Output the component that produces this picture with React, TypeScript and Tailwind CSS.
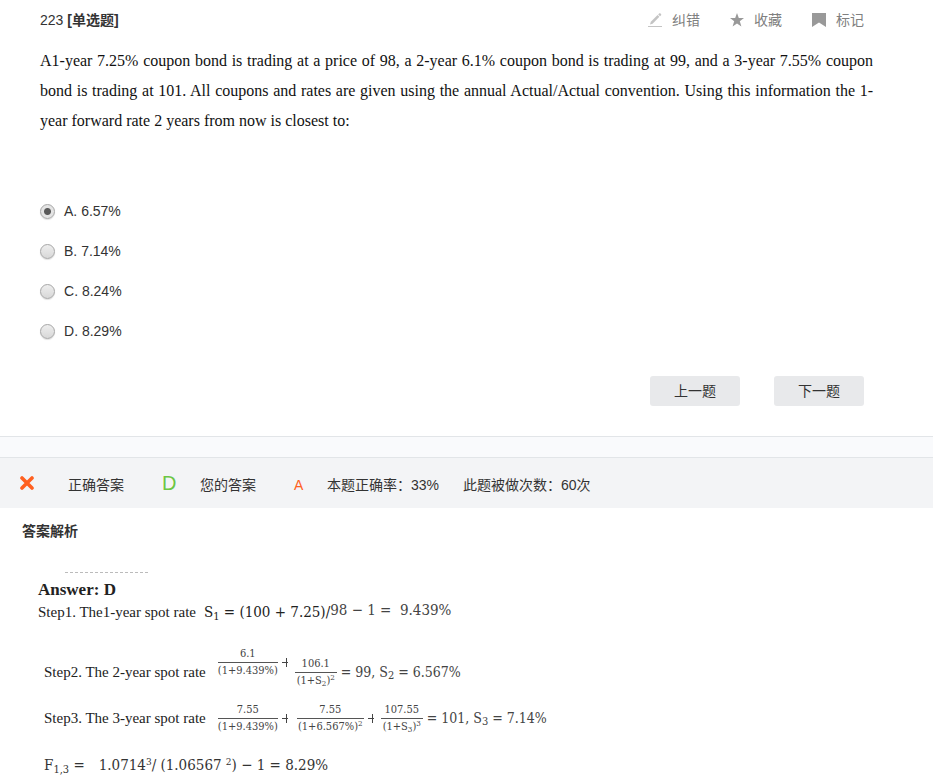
import { useState, type ReactNode } from "react";
import clsx from "clsx";

interface Option {
  key: string;
  value: string;
}

const OPTIONS: Option[] = [
  { key: "A", value: "6.57%" },
  { key: "B", value: "7.14%" },
  { key: "C", value: "8.24%" },
  { key: "D", value: "8.29%" },
];

function PencilIcon() {
  return (
    <svg width="14" height="14" viewBox="0 0 14 14" fill="#c4c4c4" aria-hidden="true">
      <path d="M2 11.5 2.8 8.8 9.6 2 11.4 3.8 4.6 10.7Z" />
      <path d="M10.2 1.4 11.3.3Q11.8 0 12.3.3L13.1 1.2Q13.5 1.7 13.1 2.2L12 3.2Z" />
      <path d="M0 13H14V14H0Z" />
    </svg>
  );
}

function StarIcon() {
  return (
    <svg width="14" height="14" viewBox="0 0 14 14" fill="#999" aria-hidden="true">
      <path d="M7 0 8.8 5H14L9.8 8.2 11.4 13.6 7 10.4 2.6 13.6 4.2 8.2 0 5H5.2Z" />
    </svg>
  );
}

function BookmarkIcon() {
  return (
    <svg width="14" height="14" viewBox="0 0 14 14" fill="#999" aria-hidden="true">
      <path d="M0 0H14V14L7 9.5 0 14Z" />
    </svg>
  );
}

function WrongIcon() {
  return (
    <svg width="14" height="14" viewBox="0 0 14 14" role="img" aria-label="错误">
      <path d="M2 2 12 12M12 2 2 12" stroke="#ff6020" strokeWidth="3.6" strokeLinecap="round" />
    </svg>
  );
}

function ToolButton({ icon, label }: { icon: ReactNode; label: string }) {
  return (
    <button type="button" className="flex items-center gap-[10px] text-[#808080]">
      {icon}
      {label}
    </button>
  );
}

function MathText({ children, className }: { children: ReactNode; className?: string }) {
  return (
    <span className={clsx("font-['DejaVu_Serif_Condensed','DejaVu_Serif',serif]", className)}>{children}</span>
  );
}

function Frac({ top, children, className }: { top: string; children: ReactNode; className?: string }) {
  return (
    <MathText className={clsx("flex flex-col text-center text-[11px] leading-4 text-[#444]", className)}>
      <span className="border-b border-[#555]">{top}</span>
      <span>{children}</span>
    </MathText>
  );
}

// the right arm of the plus is cut off
function Plus() {
  return (
    <svg width="7" height="9" viewBox="0 0 7 9" className="shrink-0" role="img" aria-label="+">
      <path d="M0 4.5H6M4.5 0V9" stroke="#444" strokeWidth="1" />
    </svg>
  );
}

function Sub({ children }: { children: ReactNode }) {
  return <sub className="text-[11px]">{children}</sub>;
}

function Sup({ children }: { children: ReactNode }) {
  return <sup className="text-[10px]">{children}</sup>;
}

function Question() {
  const [selected, setSelected] = useState("A");

  return (
    <section className="pl-10 pr-[60px]">
      <header className="flex h-10 items-center justify-between pr-[9px]">
        <h1>
          223 <b>[单选题]</b>
        </h1>
        <div className="flex gap-[30px]">
          <ToolButton icon={<PencilIcon />} label="纠错" />
          <ToolButton icon={<StarIcon />} label="收藏" />
          <ToolButton icon={<BookmarkIcon />} label="标记" />
        </div>
      </header>

      <p className="mt-[6px] text-justify font-['Liberation_Serif',serif] text-[16px] leading-[30px] text-[#111]">
        A1-year 7.25% coupon bond is trading at a price of 98, a 2-year 6.1% coupon bond is trading at 99, and a 3-year
        7.55% coupon bond is trading at 101. All coupons and rates are given using the annual Actual/Actual convention.
        Using this information the 1-year forward rate 2 years from now is closest to:
      </p>

      <fieldset className="mt-[55px]">
        {OPTIONS.map((option) => (
          <label key={option.key} className="flex h-10 items-center gap-[9px]">
            <input
              type="radio"
              name="answer"
              value={option.key}
              checked={selected === option.key}
              onChange={() => setSelected(option.key)}
              className="size-[15px] appearance-none rounded-full border border-[#a6a6a6] bg-linear-to-b from-[#eee] to-[#d8d8d8] shadow-[0_1px_1px_#e0e0e0] checked:bg-[radial-gradient(circle,#5a5a5a_3px,#e4e4e4_4px)]"
            />
            {option.key}. {option.value}
          </label>
        ))}
      </fieldset>

      <div className="mt-[25px] flex justify-end gap-[34px] pr-[9px]">
        <button type="button" className="h-[30px] w-[90px] rounded-[3px] bg-[#e8e9eb]">
          上一题
        </button>
        <button type="button" className="h-[30px] w-[90px] rounded-[3px] bg-[#e8e9eb]">
          下一题
        </button>
      </div>
    </section>
  );
}

function ResultBar() {
  return (
    <section className="mt-[30px] border-t border-[#e2e5e8] bg-[#f9fafc] pt-5">
      <div className="flex h-[51px] items-center border-t border-[#e2e5e8] bg-[#f3f4f6] pl-5">
        <WrongIcon />
        <dl className="ml-[34px] flex items-baseline">
          <dt>正确答案</dt>
          <dd className="ml-[38px] w-[38px] text-[20px] text-[#6cc644]">D</dd>
          <dt>您的答案</dt>
          <dd className="ml-[38px] w-[33px] text-[#ff6020]">A</dd>
          <dt>本题正确率：</dt>
          <dd className="mr-6">33%</dd>
          <dt>此题被做次数：</dt>
          <dd>60次</dd>
        </dl>
      </div>
    </section>
  );
}

function Analysis() {
  return (
    <section className="pt-[11px]">
      <h2 className="pl-[22px] leading-6 font-bold">答案解析</h2>
      <div className="mt-[29px] ml-[65px] w-[83px] border-t border-dashed border-[#bbb]" />

      <div className="pl-[38px] font-['Liberation_Serif',serif] text-[15px] whitespace-nowrap text-[#222]">
        <h3 className="mt-[5px] text-[17px] leading-6 font-bold">Answer: D</h3>
        <div className="flex h-5 items-center">
          <span>Step1. The1-year spot rate</span>
          <MathText className="ml-2">
            S<Sub>1</Sub> = (100 + 7.25)/
          </MathText>
          <MathText className="pb-1 text-[#444]">98 − 1 = &nbsp;9.439%</MathText>
        </div>

        <div className="pl-[6px]">
          <div className="mt-[25px] flex h-[50px] items-center">
            <span>Step2. The 2-year spot rate</span>
            <span className="ml-3 flex items-center gap-1 pb-5">
              <Frac top="6.1" className="w-[60px]">
                (1+9.439%)
              </Frac>
              <Plus />
            </span>
            <Frac top="106.1" className="ml-[6px] w-[42px]">
              (1+S<sub className="text-[8px]">2</sub>)<sup className="text-[8px]">2</sup>
            </Frac>
            <MathText className="ml-1 text-[14px] text-[#444]">
              = 99, S<Sub>2</Sub> = 6.567%
            </MathText>
          </div>

          <div className="flex h-[42px] items-center">
            <span>Step3. The 3-year spot rate</span>
            <Frac top="7.55" className="mr-1 ml-3 w-[60px]">
              (1+9.439%)
            </Frac>
            <Plus />
            <Frac top="7.55" className="mr-1 ml-2 w-[67px]">
              (1+6.567%)<sup className="text-[8px]">2</sup>
            </Frac>
            <Plus />
            <Frac top="107.55" className="ml-[6px] w-[42px]">
              (1+S<sub className="text-[8px]">3</sub>)<sup className="text-[8px]">3</sup>
            </Frac>
            <MathText className="ml-1 text-[14px] text-[#444]">
              = 101, S<Sub>3</Sub> = 7.14%
            </MathText>
          </div>

          <div className="mt-1 flex h-[44px] items-center text-[#333]">
            <MathText>
              F<Sub>1,3</Sub> =
            </MathText>
            <MathText className="ml-[14px]">
              1.0714<Sup>3</Sup>/ (1.06567 <Sup>2</Sup>) − 1 = 8.29%
            </MathText>
          </div>
        </div>
      </div>
    </section>
  );
}

export default function App() {
  return (
    <main className="bg-white font-['Liberation_Sans','Noto_Sans_CJK_SC',sans-serif] text-[14px] text-[#333]">
      <Question />
      <ResultBar />
      <Analysis />
    </main>
  );
}
